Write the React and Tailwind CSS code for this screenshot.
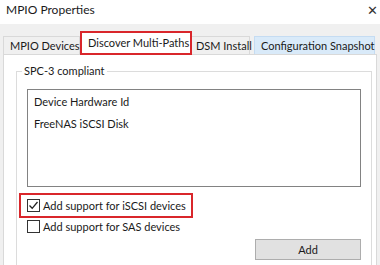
import React from 'react';

const CheckBox = ({ checked }) => (
  <span className="w-[13px] h-[13px] border border-[#333333] bg-white flex items-center justify-center shrink-0">
    {checked && (
      <svg width="11" height="11" viewBox="0 0 11 11">
        <path d="M1.5 5.5 L4.2 8.3 L9.5 2" fill="none" stroke="#222" strokeWidth="1.3" />
      </svg>
    )}
  </span>
);

const App = () => {
  return (
    <div
      className="w-[380px] h-[265px] bg-[#f0f0f0] overflow-hidden flex flex-col text-[11px] text-[#1a1a1a] whitespace-nowrap"
      style={{ fontFamily: 'Lato, "Noto Sans", sans-serif' }}
    >
      {/* Title bar */}
      <div className="h-[24px] bg-white flex items-start justify-between pl-[6px] pr-[2px] pt-[4px] shrink-0">
        <span className="text-[12px] leading-none">MPIO Properties</span>
        <span className="text-[13px] leading-none text-[#333]">✕</span>
      </div>

      {/* Tabs */}
      <div className="h-[30px] flex items-end pl-[3px] shrink-0">
        <div className="h-[18px] w-[77px] pl-[6px] border border-b-0 border-[#d9d9d9] bg-[#f0f0f0] flex items-center leading-none">
          MPIO Devices
        </div>
        <div className="h-[24px] w-[112px] border-2 border-[#d9262b] bg-white flex items-center pl-[6px] pb-[2px] leading-none -mb-[1px] relative z-10">
          Discover Multi-Paths
        </div>
        <div className="h-[18px] w-[58px] pl-[4px] border border-b-0 border-l-0 border-[#d9d9d9] bg-[#f0f0f0] flex items-center leading-none">
          DSM Install
        </div>
        <div className="h-[18px] w-[121px] ml-[4px] pl-[6px] border border-b-0 border-[#c5dcf2] bg-[#d9eaf9] flex items-center leading-none">
          Configuration Snapshot
        </div>
      </div>

      {/* Panel */}
      <div className="flex-1 mx-[3px] bg-white border border-[#d9d9d9] pl-[12px] pr-[4px] pt-[16px]">
        <div className="h-[220px] border border-[#dcdcdc] relative pl-[10px] pr-[10px] pt-[17px]">
          <span className="absolute -top-[8px] left-[5px] bg-white px-[2px] leading-[14px]">SPC-3 compliant</span>

          <div className="h-[98px] border border-[#828282] pl-[6px] pt-[1px]">
            <div className="h-[23px] flex items-center">Device Hardware Id</div>
            <div className="h-[21px] flex items-center">FreeNAS iSCSI Disk</div>
          </div>

          <div className="mt-[6px] -ml-[8px] w-[174px] h-[25px] border-2 border-[#d9262b] flex items-center pl-[6px] gap-[3px]">
            <CheckBox checked />
            <span className="leading-none">Add support for iSCSI devices</span>
          </div>
          <div className="mt-[2px] flex items-center gap-[3px]">
            <CheckBox />
            <span className="leading-none">Add support for SAS devices</span>
          </div>

          <div className="flex justify-end mt-[6px]">
            <button className="w-[106px] h-[21px] bg-[#e1e1e1] border border-[#adadad] flex items-center justify-center leading-none">
              Add
            </button>
          </div>
        </div>
      </div>
    </div>
  );
};

export default App;
